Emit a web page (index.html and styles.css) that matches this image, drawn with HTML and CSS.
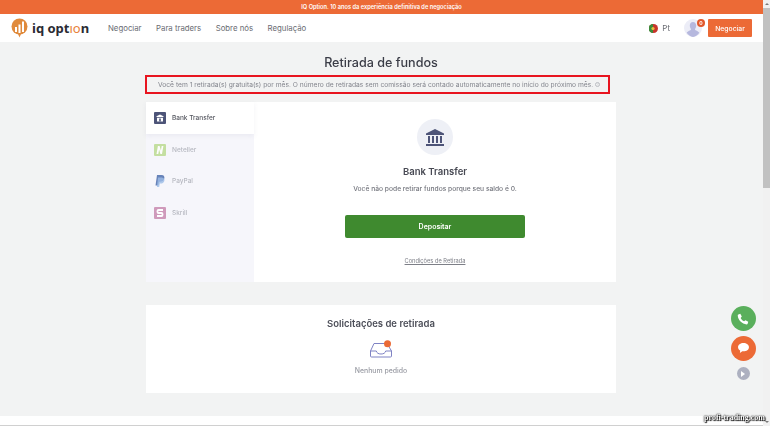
FILE: index.html
```html
<!DOCTYPE html>
<html lang="pt">
<head>
    <meta charset="UTF-8">
    <title>Retirada de fundos</title>
    <link rel="stylesheet" href="styles.css">
</head>
<body>
    <div class="viewport">
        <div class="page">
            <div class="promo">IQ Option. 10 anos da experiência definitiva de negociação</div>
            <header class="topbar">
                <a class="logo">
                    <svg width="17" height="20" viewBox="0 0 17 20">
                        <circle cx="8.5" cy="8.5" r="8" fill="#e08a3c"/>
                        <path d="M7 16h3l-1.500 3.500z" fill="#e08a3c"/>
                        <path d="M4 9h2v5H4zM7.500 6.500h2V15h-2zM11 3.500h2V14h-2z" fill="#fff"/>
                    </svg>
                    <span class="logo-text">iq opt<span class="logo-mark">ı</span><span class="logo-o">o</span>n</span>
                </a>
                <nav class="mainnav">
                    <a>Negociar</a>
                    <a>Para traders</a>
                    <a>Sobre nós</a>
                    <a>Regulação</a>
                </nav>
                <div class="lang">
                    <svg width="9" height="9" viewBox="0 0 9 9">
                        <circle cx="4.500" cy="4.500" r="4.500" fill="#c8352c"/>
                        <path d="M4 0A4.500 4.500 0 0 0 4 9z" fill="#3c8a3a"/>
                        <circle cx="4" cy="4.500" r="1.600" fill="#e6c040"/>
                    </svg>
                    Pt
                </div>
                <div class="avatar">
                    <svg width="18" height="18" viewBox="0 0 18 18">
                        <circle cx="9" cy="9" r="9" fill="#ecedf7"/>
                        <path d="M9 3c2 0 3.200 1.600 3.200 3.600S11 10 11 10.500c0 1 3.500 1.500 4.300 3.300A9 9 0 0 1 9 18a9 9 0 0 1-6.300-4.200C3.500 12 7 11.500 7 10.500 7 10 5.800 8.600 5.800 6.600S7 3 9 3z" fill="#b6b8de"/>
                    </svg>
                    <span class="badge">0</span>
                </div>
                <button class="trade-btn">Negociar</button>
            </header>

            <main class="content">
                <h1 class="page-title">Retirada de fundos</h1>
                <div class="notice">
                    <span class="notice-box">Você tem 1 retirada(s) gratuita(s) por mês. O número de retiradas sem comissão será contado automaticamente no início do próximo mês.<span class="help">?</span></span>
                </div>

                <section class="card withdraw">
                    <ul class="methods">
                        <li class="method active">
                            <svg width="12" height="12" viewBox="0 0 12 12">
                                <rect width="12" height="12" rx="1" fill="#4d5478"/>
                                <path d="M6 2.500l3.500 1.800v.7h-7v-.7zM3 5.800h6v3.700H3z" fill="#fff"/>
                                <rect x="5.200" y="6.500" width="1.600" height="3" fill="#4d5478"/>
                            </svg>
                            Bank Transfer
                        </li>
                        <li class="method">
                            <svg width="12" height="12" viewBox="0 0 12 12">
                                <rect width="12" height="12" rx="1" fill="#bcdb92"/>
                                <path d="M2.500 10l1.400-8h1.700l1.300 4.500L7.700 2h1.700l-1.400 8H6.400L5.100 5.500 4.300 10z" fill="#fff"/>
                            </svg>
                            Neteller
                        </li>
                        <li class="method">
                            <svg width="12" height="12" viewBox="0 0 12 12">
                                <path d="M3 0h4.500C10 0 10.800 1.700 10.300 3.600 9.800 5.800 8.200 6.800 6 6.800H5L4.300 10.500H1.500z" fill="#4f6fae"/>
                                <path d="M4 2.500h3.800C10 3 10.800 4 10.400 5.700 9.900 7.800 8.400 8.500 6.500 8.500H5.800L5.200 12H2.900z" fill="#8fb4e4" opacity=".8"/>
                            </svg>
                            PayPal
                        </li>
                        <li class="method">
                            <svg width="12" height="12" viewBox="0 0 12 12">
                                <rect width="12" height="12" rx="1" fill="#c98ab0"/>
                                <path d="M9 3H4.500a1 1 0 0 0-1 1v1a1 1 0 0 0 1 1h3a1 1 0 0 1 1 1v1a1 1 0 0 1-1 1H3" fill="none" stroke="#fff" stroke-width="1.800"/>
                            </svg>
                            Skrill
                        </li>
                    </ul>
                    <div class="method-detail">
                        <div class="bank-icon">
                            <svg width="20" height="17" viewBox="0 0 20 17">
                                <path d="M10 0l9 4.500V6H1V4.500z" fill="#4d5478"/>
                                <path d="M3 7h2v7H3zM7 7h2v7H7zM11 7h2v7h-2zM15 7h2v7h-2zM1 15h18v2H1z" fill="#4d5478"/>
                            </svg>
                        </div>
                        <h2 class="detail-title">Bank Transfer</h2>
                        <p class="detail-text">Você não pode retirar fundos porque seu saldo é 0.</p>
                        <button class="deposit-btn">Depositar</button>
                        <a class="terms">Condições de Retirada</a>
                    </div>
                </section>

                <section class="card requests">
                    <h2 class="requests-title">Solicitações de retirada</h2>
                    <div class="inbox">
                        <svg width="24" height="18" viewBox="0 0 24 18">
                            <path d="M5 3.500h13l4.500 7.500V16a1 1 0 0 1-1 1h-19a1 1 0 0 1-1-1v-5z" fill="none" stroke="#7f83c4" stroke-width="1"/>
                            <path d="M1.500 11h5.800c.5 2 2 3 4.700 3s4.200-1 4.700-3h5.800" fill="none" stroke="#7f83c4" stroke-width="1"/>
                            <circle cx="18.500" cy="3.800" r="3.500" fill="#ea6a36"/>
                        </svg>
                    </div>
                    <p class="requests-empty">Nenhum pedido</p>
                </section>
            </main>
            <footer class="footer"></footer>
        </div>

        <div class="float-actions">
            <button class="fab fab-call">
                <svg width="12" height="12" viewBox="0 0 24 24"><path d="M6.600 1.500l3 5.500-2.300 2.800c1.300 2.900 3.800 5.400 6.900 6.900l2.800-2.300 5.500 3-1.200 4.300c-.3.8-1 1.300-1.900 1.300C10 22 2 14 1.500 5.100c0-.9.500-1.600 1.300-1.900z" fill="#fff"/></svg>
            </button>
            <button class="fab fab-chat">
                <svg width="11" height="10" viewBox="0 0 24 22"><path d="M12 0c6.600 0 12 3.900 12 9.200s-5.400 9.200-12 9.200c-.9 0-1.800-.1-2.600-.2L4 22l.8-5.500C2 14.800 0 12.200 0 9.200 0 3.900 5.400 0 12 0z" fill="#fff"/></svg>
            </button>
            <button class="fab-small">
                <svg width="4" height="6" viewBox="0 0 4 6"><path d="M0 0l4 3-4 3z" fill="#fff"/></svg>
            </button>
        </div>
    </div>
    <div class="scrollbar">
        <div class="scroll-arrow-up"></div>
        <div class="scroll-thumb"></div>
        <div class="scroll-arrow-down"></div>
    </div>
    <div class="watermark">profi-trading.com</div>
</body>
</html>
```

FILE: styles.css
```css
* { box-sizing: border-box; }
html, body { margin: 0; height: 100%; overflow: hidden; }
body { position: relative; display: flex; font-family: Inter, "Open Sans", sans-serif; color: #41434f; background: #f2f3f3; }
ul { list-style: none; margin: 0; padding: 0; }
h1, h2, p { margin: 0; font-weight: 500; }
button { font-family: inherit; border: 0; padding: 0; }

/* the reference is a scaled down capture, so everything is a little soft */
.viewport { position: relative; flex: 1; height: 426px; filter: blur(.3px); }
.page { display: flex; flex-direction: column; height: 426px; }

.promo { height: 14px; background: #ec6a36; color: #fff; font-size: 5.700px; font-weight: 600; line-height: 14px; text-align: center; }

.topbar { display: flex; align-items: center; height: 28px; padding: 0 11px; background: #fff; }
.logo { display: flex; align-items: center; gap: 4px; width: 97px; }
.logo-text { font-family: "Noto Sans", sans-serif; font-size: 13px; font-weight: 700; color: #2a2b33; }
.logo-mark, .logo-o { color: #e8813a; font-weight: 400; }
.mainnav { display: flex; gap: 14.500px; font-size: 7.800px; color: #6a6c73; }
.lang { display: flex; align-items: center; gap: 4px; margin-left: auto; margin-right: 1px; font-size: 8px; color: #6a6c73; }
.avatar { position: relative; display: flex; margin-left: 13px; }
.badge { position: absolute; top: 0; right: -3px; width: 8px; height: 8px; border-radius: 50%; background: #e2582b; color: #fff; font-size: 5px; font-weight: 700; line-height: 8px; text-align: center; }
.trade-btn { width: 44px; height: 18px; margin-left: 6px; border-radius: 1px; background: #ec6a36; color: #fff; font-size: 6.800px; font-weight: 500; }

.content { display: flex; flex-direction: column; align-items: center; flex: 1; padding: 13px 1px 0 0; }
.page-title { font-size: 12.600px; line-height: 15px; color: #3b3d47; }
.notice { display: flex; width: 470px; height: 19px; margin-top: 5px; }
.notice-box { display: flex; align-items: center; gap: 2px; width: 465px; margin-left: -1px; padding: 0 11px; border: 2px solid #e8141f; font-size: 6.700px; white-space: nowrap; color: #83858d; }
.help { display: inline-block; flex: none; width: 5px; height: 5px; border: .5px solid #b9bbc0; border-radius: 50%; font-size: 3px; line-height: 4px; text-align: center; color: #b9bbc0; }

.card { width: 470px; background: #fff; }
.withdraw { display: flex; height: 180px; margin-top: 8px; }
.methods { display: flex; flex-direction: column; width: 108px; background: #f6f6fb; }
.method { display: flex; align-items: center; gap: 6px; height: 31.700px; padding-left: 8px; font-size: 6.500px; font-weight: 500; color: #b6b8c0; }
.method.active { background: #fff; color: #54565f; box-shadow: 0 2px 5px rgba(90, 90, 130, .08); }
.method svg { opacity: .85; }
.method.active svg { opacity: 1; }

.method-detail { display: flex; flex-direction: column; align-items: center; flex: 1; padding-top: 17px; }
.bank-icon { display: flex; align-items: center; justify-content: center; width: 36px; height: 36px; border-radius: 50%; background: #eef0f6; }
.detail-title { margin-top: 11px; font-size: 9.500px; line-height: 12px; font-weight: 600; color: #474953; }
.detail-text { margin-top: 6px; font-size: 6.700px; line-height: 10px; color: #74767e; }
.deposit-btn { width: 180px; height: 23px; margin-top: 21px; border-radius: 2px; background: #3f8a2f; color: #fff; font-size: 7px; font-weight: 600; }
.terms { margin-top: 19px; font-size: 5.700px; line-height: 8px; color: #7d7f87; text-decoration: underline; }

.requests { display: flex; flex-direction: column; align-items: center; height: 88px; margin-top: 23px; }
.requests-title { margin-top: 13px; font-size: 9.500px; line-height: 12px; font-weight: 600; color: #4c4e58; }
.inbox { display: flex; margin-top: 10px; }
.requests-empty { margin-top: 8px; font-size: 6.900px; line-height: 9px; color: #9a9ca4; }

.footer { flex: none; height: 10px; background: #fff; border-bottom: 1px solid #d0d0d0; }

.float-actions { position: absolute; top: 306px; right: 7px; display: flex; flex-direction: column; align-items: center; gap: 4.500px; width: 26px; }
.fab { display: flex; align-items: center; justify-content: center; flex: none; width: 25px; height: 25px; border-radius: 50%; }
.fab-call { background: #5aaf5c; }
.fab-chat { background: #ec6a36; }
.fab-small { display: flex; align-items: center; justify-content: center; width: 13px; height: 13px; margin-top: 2px; border-radius: 50%; background: #adb0c0; }

.watermark { position: absolute; right: 5px; bottom: 4px; color: #fff; font-family: "Liberation Serif", serif; font-size: 8px; font-weight: 700; line-height: 9px; text-shadow: 0 0 1px #000, 0 0 2px #000, 1px 1px 1px #000; }

.scrollbar { display: flex; flex-direction: column; flex: none; width: 7px; height: 426px; background: #f1f1f1; }
.scroll-arrow-up { width: 4px; height: 2px; margin: 3px auto 0; border: 2px solid transparent; border-top: 0; border-bottom: 2px solid #7a7a7a; }
.scroll-thumb { height: 180px; margin-top: 3px; background: #c1c1c1; }
.scroll-arrow-down { width: 4px; height: 2px; margin: auto auto 3px; border: 2px solid transparent; border-bottom: 0; border-top: 2px solid #7a7a7a; }
```
